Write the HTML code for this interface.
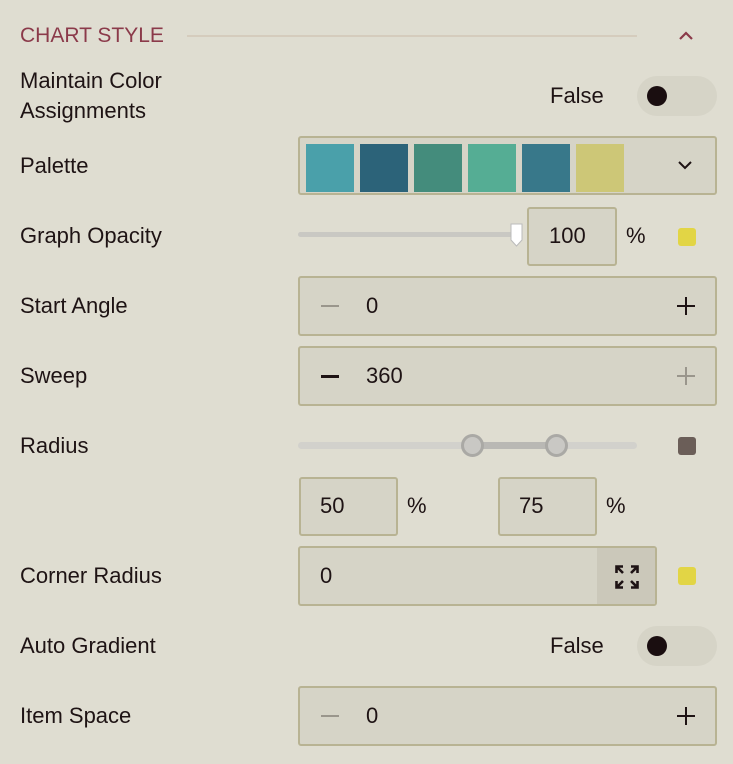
<!DOCTYPE html>
<html><head><meta charset="utf-8">
<style>
*{margin:0;padding:0;box-sizing:border-box}
body{width:733px;height:764px;background:#dfddd1;font-family:"Liberation Sans",sans-serif;color:#1e1314;position:relative;overflow:hidden}
.a{position:absolute}
.lbl{position:absolute;left:20px;font-size:22px;line-height:30px;transform:translateY(-50%)}
.box{position:absolute;background:#d6d4c7;border:2px solid #b8b393;border-radius:3px}
.t{position:absolute;font-size:22px;transform:translateY(-50%);line-height:30px}
.tog{position:absolute;left:637px;width:80px;height:40px;border-radius:20px;background:#d6d4c7}
.tog i{position:absolute;left:10px;top:10px;width:20px;height:20px;border-radius:50%;background:#1a0e10}
.sq{position:absolute;left:678px;width:18px;height:18px;border-radius:3px}
.sw{position:absolute;top:6px;width:48px;height:48px}
.pm{position:absolute;width:18px;height:2px}
.pv{position:absolute;width:2px;height:18px}
</style></head><body>
<div class="t" style="left:20px;top:36px;color:#8b3a4a;font-size:21px">CHART STYLE</div>
<div class="a" style="left:187px;top:35px;width:450px;height:2px;background:#d5ccbd"></div>
<svg class="a" style="left:678px;top:30px" width="16" height="12"><path d="M2 9 L8 3 L14 9" fill="none" stroke="#8b3a4a" stroke-width="2.2"/></svg>

<div class="lbl" style="top:81px">Maintain Color</div>
<div class="lbl" style="top:111px">Assignments</div>
<div class="t" style="left:550px;top:96px">False</div>
<div class="tog" style="top:76px"><i></i></div>

<div class="lbl" style="top:166px">Palette</div>
<div class="box" style="left:298px;top:136px;width:419px;height:59px">
<div class="sw" style="left:6px;background:#4aa0aa"></div>
<div class="sw" style="left:60px;background:#2c6379"></div>
<div class="sw" style="left:114px;background:#448c7c"></div>
<div class="sw" style="left:168px;background:#55ad94"></div>
<div class="sw" style="left:222px;background:#38788a"></div>
<div class="sw" style="left:276px;background:#cdc777"></div>
<svg class="a" style="left:378px;top:22px" width="14" height="10"><path d="M1 2 L7 8 L13 2" fill="none" stroke="#1e1314" stroke-width="2"/></svg>
</div>

<div class="lbl" style="top:236px">Graph Opacity</div>
<div class="a" style="left:298px;top:232px;width:218px;height:5px;border-radius:3px;background:#c9c8c3"></div>
<svg class="a" style="left:509px;top:222px" width="16" height="26"><path d="M2 2 H13 V18 L7.5 24 L2 18 Z" fill="#fff" stroke="#bbb" stroke-width="1"/></svg>
<div class="box" style="left:527px;top:207px;width:90px;height:59px"></div>
<div class="t" style="left:549px;top:236px">100</div>
<div class="t" style="left:626px;top:236px">%</div>
<div class="sq" style="top:228px;background:#e2d545"></div>

<div class="lbl" style="top:306px">Start Angle</div>
<div class="box" style="left:298px;top:276px;width:419px;height:60px"></div>
<div class="pm" style="left:321px;top:305px;background:#9a968c"></div>
<div class="t" style="left:366px;top:306px">0</div>
<div class="pm" style="left:677px;top:305px;background:#1e1314"></div>
<div class="pv" style="left:685px;top:297px;background:#1e1314"></div>

<div class="lbl" style="top:376px">Sweep</div>
<div class="box" style="left:298px;top:346px;width:419px;height:60px"></div>
<div class="pm" style="left:321px;top:375px;height:3px;background:#1e1314"></div>
<div class="t" style="left:366px;top:376px">360</div>
<div class="pm" style="left:677px;top:375px;background:#9a968c"></div>
<div class="pv" style="left:685px;top:367px;background:#9a968c"></div>

<div class="lbl" style="top:446px">Radius</div>
<div class="a" style="left:298px;top:442px;width:339px;height:7px;border-radius:4px;background:#d2d1cc"></div>
<div class="a" style="left:472px;top:442px;width:84px;height:7px;background:#b9b8b4"></div>
<div class="a" style="left:461px;top:434px;width:23px;height:23px;border-radius:50%;background:#c9c8c4;border:3px solid #aaa9a5"></div>
<div class="a" style="left:545px;top:434px;width:23px;height:23px;border-radius:50%;background:#c9c8c4;border:3px solid #aaa9a5"></div>
<div class="sq" style="top:437px;background:#6b5e58"></div>

<div class="box" style="left:299px;top:477px;width:99px;height:59px"></div>
<div class="t" style="left:320px;top:506px">50</div>
<div class="t" style="left:407px;top:506px">%</div>
<div class="box" style="left:498px;top:477px;width:99px;height:59px"></div>
<div class="t" style="left:519px;top:506px">75</div>
<div class="t" style="left:606px;top:506px">%</div>

<div class="lbl" style="top:576px">Corner Radius</div>
<div class="box" style="left:298px;top:546px;width:359px;height:60px;overflow:hidden">
<div class="a" style="left:297px;top:0;width:60px;height:60px;background:#cbc8ba"></div>
</div>
<div class="t" style="left:320px;top:576px">0</div>
<svg class="a" style="left:615px;top:565px" width="24" height="24" fill="none" stroke="#1e1314" stroke-width="2.6">
<path d="M1.5 8 V1.5 H8 M1.5 1.5 L8 8"/><path d="M22.5 8 V1.5 H16 M22.5 1.5 L16 8"/><path d="M1.5 16 V22.5 H8 M1.5 22.5 L8 16"/><path d="M22.5 16 V22.5 H16 M22.5 22.5 L16 16"/></svg>
<div class="sq" style="top:567px;background:#e2d545"></div>

<div class="lbl" style="top:646px">Auto Gradient</div>
<div class="t" style="left:550px;top:646px">False</div>
<div class="tog" style="top:626px"><i></i></div>

<div class="lbl" style="top:716px">Item Space</div>
<div class="box" style="left:298px;top:686px;width:419px;height:60px"></div>
<div class="pm" style="left:321px;top:715px;background:#9a968c"></div>
<div class="t" style="left:366px;top:716px">0</div>
<div class="pm" style="left:677px;top:715px;background:#1e1314"></div>
<div class="pv" style="left:685px;top:707px;background:#1e1314"></div>
</body></html>
